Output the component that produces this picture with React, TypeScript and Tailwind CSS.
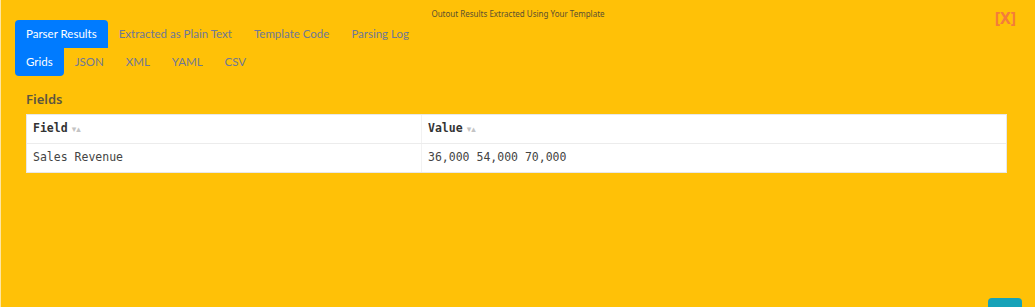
import React from "react";

const SortIcon = () => (
  <span className="ml-[4px] inline-flex items-center text-[9px] leading-none text-[#c4c4c4]" style={{ fontFamily: "'DejaVu Sans', sans-serif" }}>
    ▾▴
  </span>
);

export default function App() {
  const sans = { fontFamily: "Lato, 'Noto Sans', sans-serif" };
  const mono = { fontFamily: "'DejaVu Sans Mono', monospace" };
  return (
    <div className="relative h-[307px] w-[1035px] overflow-hidden border-l border-[#ffe6a0] bg-[#ffc107]" style={sans}>
      <div className="pt-[8px] text-center text-[8px] leading-[12px] text-[#5a5030]" style={{ fontFamily: "'Noto Sans', sans-serif" }}>
        Outout Results Extracted Using Your Template
      </div>
      <div className="absolute right-[19px] top-[8px] text-[16px] font-bold leading-[20px] text-[#f47c3c]" style={{ fontFamily: "'Noto Sans', sans-serif" }}>[X]</div>
      <div className="flex items-end pl-[14px]">
        <div className="flex h-[28px] items-center rounded-t-[4px] bg-[#007bff] px-[11px] text-[11.5px] text-white">Parser Results</div>
        <div className="flex h-[28px] items-center px-[11px] text-[11.5px] text-[#6f7896]">Extracted as Plain Text</div>
        <div className="flex h-[28px] items-center px-[11px] text-[11.5px] text-[#6f7896]">Template Code</div>
        <div className="flex h-[28px] items-center px-[11px] text-[11.5px] text-[#6f7896]">Parsing Log</div>
      </div>
      <div className="flex items-end pl-[14px]">
        <div className="flex h-[28px] items-center rounded-b-[4px] bg-[#007bff] px-[11px] text-[11.5px] text-white">Grids</div>
        <div className="flex h-[28px] items-center px-[11px] text-[11.5px] text-[#6f7896]">JSON</div>
        <div className="flex h-[28px] items-center px-[11px] text-[11.5px] text-[#6f7896]">XML</div>
        <div className="flex h-[28px] items-center px-[11px] text-[11.5px] text-[#6f7896]">YAML</div>
        <div className="flex h-[28px] items-center px-[11px] text-[11.5px] text-[#6f7896]">CSV</div>
      </div>
      <div className="px-[25px] pt-[14px]">
        <div className="text-[13px] font-semibold leading-[18px] text-[#5c5640]" style={{ fontFamily: "'Noto Sans', sans-serif" }}>Fields</div>
        <div className="mt-[6px] w-[981px] border border-[#e8e8e8] bg-white" style={mono}>
          <div className="grid h-[29px] grid-cols-[395px_1fr] border-b border-[#ececec]">
            <div className="flex items-center border-r border-[#f2f2f2] px-[6px] text-[11.5px] font-bold text-[#333]">
              Field<SortIcon />
            </div>
            <div className="flex items-center px-[6px] text-[11.5px] font-bold text-[#333]">
              Value<SortIcon />
            </div>
          </div>
          <div className="grid h-[28px] grid-cols-[395px_1fr]">
            <div className="flex items-center border-r border-[#f2f2f2] px-[6px] text-[11.5px] text-[#444]">Sales Revenue</div>
            <div className="flex items-center px-[6px] text-[11.5px] text-[#444]">36,000 54,000 70,000</div>
          </div>
        </div>
      </div>
      <div className="absolute bottom-0 right-[13px] h-[9px] w-[34px] rounded-t-[4px] bg-[#17a2b8]" />
    </div>
  );
}
